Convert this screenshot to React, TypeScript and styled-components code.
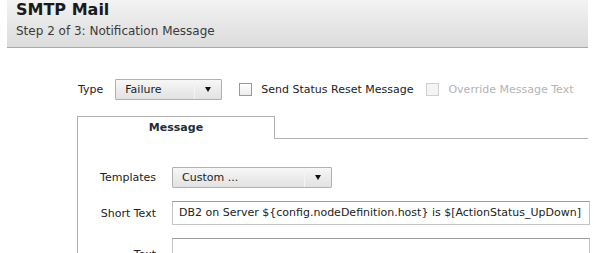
import React from "react";
import styled, { createGlobalStyle } from "styled-components";

const Global = createGlobalStyle`
  html, body {
    margin: 0;
    padding: 0;
    background: #ffffff;
  }
  body {
    font-family: "DejaVu Sans", Verdana, sans-serif;
    font-size: 11px;
    color: #222;
  }
`;

const S = {
  Page: styled.div`
    width: 604px;
    height: 253px;
    overflow: hidden;
    box-sizing: border-box;
    padding-left: 7px;
  `,
  Header: styled.div`
    width: 581px;
    height: 48px;
    box-sizing: border-box;
    padding: 0 0 0 9px;
    background: linear-gradient(#f3f3f3, #e6e6e6 55%, #dcdcdc);
    border-bottom: 1px solid #a9a9a9;
  `,
  Title: styled.div`
    font-size: 16px;
    font-weight: bold;
    line-height: 20px;
    color: #1a1a1a;
  `,
  Subtitle: styled.div`
    margin-top: 3px;
    font-size: 12px;
    line-height: 16px;
    color: #3a3a3a;
  `,
  TypeRow: styled.div`
    display: flex;
    align-items: center;
    margin: 31px 0 0 71px;
    height: 21px;
  `,
  Label: styled.span<{ $muted?: boolean }>`
    color: ${(p) => (p.$muted ? "#b4b4b4" : "#222")};
    white-space: nowrap;
  `,
  Select: styled.div<{ $width: number }>`
    display: flex;
    align-items: center;
    width: ${(p) => p.$width}px;
    height: 21px;
    box-sizing: border-box;
    border: 1px solid #b0b0b0;
    border-radius: 1px;
    background: linear-gradient(#f7f7f7, #ececec 50%, #e2e2e2);
    color: #222;
  `,
  SelectText: styled.span`
    flex: 1;
    padding-left: 9px;
  `,
  Arrow: styled.span`
    width: 26px;
    height: 100%;
    display: flex;
    align-items: center;
    justify-content: center;
    border-left: 1px solid #f4f4f4;
    &::after {
      content: "";
      border-left: 3.5px solid transparent;
      border-right: 3.5px solid transparent;
      border-top: 5px solid #111;
    }
  `,
  Check: styled.span<{ $muted?: boolean }>`
    display: inline-block;
    width: 13px;
    height: 13px;
    box-sizing: border-box;
    border: 1px solid ${(p) => (p.$muted ? "#cfcfcf" : "#9a9a9a")};
    background: ${(p) =>
      p.$muted ? "#f4f4f4" : "linear-gradient(#ffffff, #ececec)"};
    margin-right: 9px;
  `,
  Gap: styled.span<{ $w: number }>`
    width: ${(p) => p.$w}px;
    flex: none;
  `,
  TabStrip: styled.div`
    display: flex;
    align-items: flex-end;
    margin: 16px 0 0 70px;
    width: 511px;
  `,
  Tab: styled.div`
    width: 198px;
    height: 23px;
    box-sizing: border-box;
    border: 1px solid #b0b0b0;
    border-bottom: none;
    text-align: center;
    font-weight: bold;
    color: #1f2d3a;
    line-height: 22px;
  `,
  TabRest: styled.div`
    flex: 1;
    border-bottom: 1px solid #b0b0b0;
  `,
  Panel: styled.div`
    margin-left: 70px;
    border-left: 1px solid #b0b0b0;
    padding-top: 28px;
    display: grid;
    grid-template-columns: 78px 418px;
    column-gap: 16px;
    row-gap: 13px;
    align-items: center;
  `,
  FieldLabel: styled.span<{ $top?: boolean }>`
    text-align: right;
    color: #222;
    white-space: nowrap;
    align-self: ${(p) => (p.$top ? "start" : "center")};
    margin-top: ${(p) => (p.$top ? "10px" : "0")};
  `,
  Input: styled.div<{ $tall?: boolean }>`
    height: ${(p) => (p.$tall ? "80px" : "24px")};
    box-sizing: border-box;
    border: 1px solid #c4c4c4;
    border-top-color: #9c9c9c;
    padding-left: 6px;
    line-height: 22px;
    color: #222;
    white-space: nowrap;
    overflow: hidden;
  `,
};

const App = () => {
  return (
    <S.Page>
      <Global />
      <S.Header>
        <S.Title>SMTP Mail</S.Title>
        <S.Subtitle>Step 2 of 3: Notification Message</S.Subtitle>
      </S.Header>

      <S.TypeRow>
        <S.Label>Type</S.Label>
        <S.Gap $w={12} />
        <S.Select $width={107}>
          <S.SelectText>Failure</S.SelectText>
          <S.Arrow />
        </S.Select>
        <S.Gap $w={17} />
        <S.Check />
        <S.Label>Send Status Reset Message</S.Label>
        <S.Gap $w={13} />
        <S.Check $muted />
        <S.Label $muted>Override Message Text</S.Label>
      </S.TypeRow>

      <S.TabStrip>
        <S.Tab>Message</S.Tab>
        <S.TabRest />
      </S.TabStrip>

      <S.Panel>
        <S.FieldLabel>Templates</S.FieldLabel>
        <S.Select $width={160}>
          <S.SelectText>Custom ...</S.SelectText>
          <S.Arrow />
        </S.Select>
        <S.FieldLabel>Short Text</S.FieldLabel>
        <S.Input>
          DB2 on Server ${"{"}config.nodeDefinition.host{"}"} is
          $[ActionStatus_UpDown]
        </S.Input>
        <S.FieldLabel $top>Text</S.FieldLabel>
        <S.Input $tall />
      </S.Panel>
    </S.Page>
  );
};

export default App;
